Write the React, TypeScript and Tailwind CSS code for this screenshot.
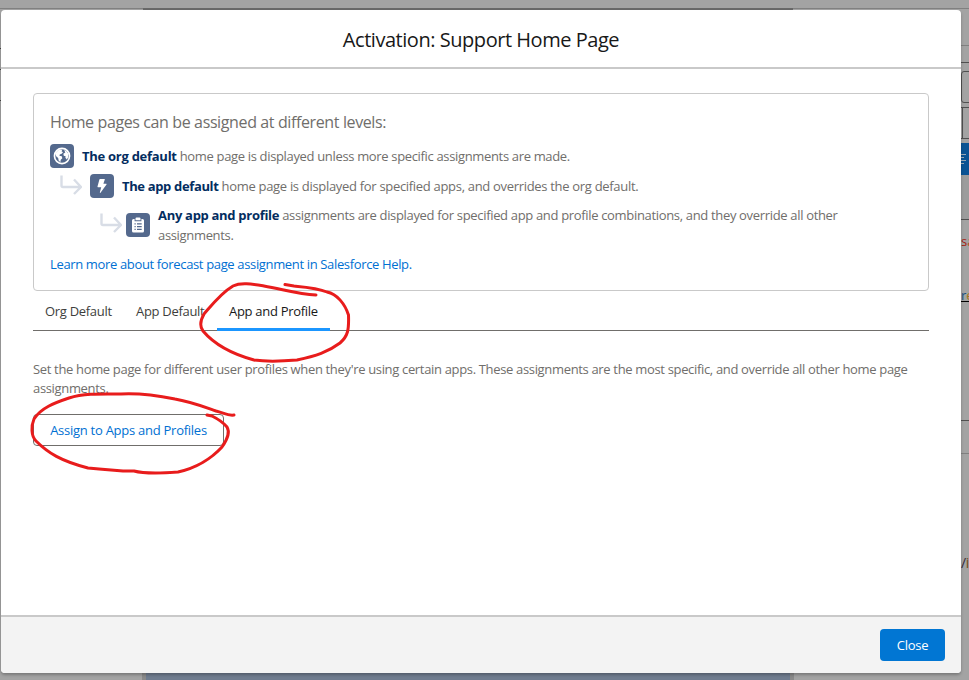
import React from 'react';

function HookArrow({ className }: { className: string }) {
  return (
    <svg className={className} viewBox="0 0 22 20" fill="none" stroke="#d8dde6" strokeWidth="2.4">
      <path d="M1.5 .5V10.5Q1.5 12 3 12H20M14 4.5L21 12L14 19" strokeLinejoin="round" />
    </svg>
  );
}

function Tile({ children }: { children: React.ReactNode }) {
  return (
    <span className="flex size-6 shrink-0 items-center justify-center rounded-[4px] bg-[#54698d]">{children}</span>
  );
}

function Backdrop() {
  return (
    <div className="flex h-full">
      <div className="flex grow flex-col">
        <div className="flex h-[10px] items-end">
          <div className="h-[2px] w-[143px] border-t border-[#808080] bg-[#a3a3a3]" />
          <div className="h-[2px] w-[650px] bg-[#686868]" />
          <div className="h-[2px] grow border-t border-[#808080]" />
        </div>
        <div className="mt-[38px] h-px w-px bg-[#444]" />
        <div className="mt-[20px] h-px w-px bg-[#444]" />
        <div className="mt-[30px] h-px w-px bg-[#444]" />
        <div className="grow" />
        <div className="ml-[142px] h-[12px] w-[652px] border-x-[4px] border-[#8a8a8a] bg-[#6f7c8f]" />
      </div>
      <div className="flex w-[8px] flex-col overflow-hidden">
        <div className="mt-[8px] h-[38px] border-y border-[#808080]" />
        <div className="mt-[16px] h-px shrink-0 bg-[#505050]" />
        <div className="mt-[8px] h-[32px] w-[12px] shrink-0 rounded-l-[3px] border border-[#505050]" />
        <div className="mt-[4px] h-[32px] shrink-0 border-y border-[#505050]">
          <div className="ml-px h-full w-px bg-[#505050]" />
        </div>
        <div className="mt-[4px] flex h-[32px] shrink-0 flex-col gap-[2px] bg-[#0b5394] pt-[11px]">
          <div className="h-[1px] w-[5px] bg-[#9aa9b8]" />
          <div className="h-[1px] w-[3px] bg-[#9aa9b8]" />
          <div className="h-[1px] w-[5px] bg-[#9aa9b8]" />
          <div className="h-[1px] w-[3px] bg-[#9aa9b8]" />
        </div>
        <div className="h-[45px] shrink-0 border-b border-[#505050] bg-[#9c9c9c]" />
        <div className="mt-[12px] h-[18px] shrink-0 text-[13px] leading-[18px] text-[#a51c12]">s<span className="text-[#b0541a]">a</span></div>
        <div className="mt-[38px] h-[14px] shrink-0 border-b border-black text-[13px] leading-[15px] text-[#164f80]">r<span className="text-[#a8781c]">e</span></div>
        <div className="h-[119px] shrink-0 border-b border-[#505050]" />
        <div className="h-[33px] shrink-0 border-b border-[#808080]" />
        <div className="mt-[99px] h-[20px] shrink-0 text-[14px] leading-[20px] tracking-[-0.4px] text-[#332a3a]">/<span className="text-[#7a4a10]">i</span></div>
      </div>
    </div>
  );
}

function Markup() {
  return (
    <svg className="absolute left-[-0.5px] top-0 h-[500px] w-[400px]" viewBox="0 0 400 500" fill="none" stroke="#e81c1c" strokeWidth="3" strokeLinecap="round" strokeLinejoin="round">
      <path d="M316 295C298 294 282 289 264 286C252 284 241 282 233 286C221 293 211 306 204 314C200 321 200 327 203 331C214 344 232 354 254 360C268 362 285 361 297 360C316 356 328 352 340 343C348 336 349 330 348.500 315C345 304 337 294 327 292C318 288 305 287 294 286L285 284.500" />
      <path d="M234 415C228 416 224 413 216 411C202 406 192 402 175 399C155 395 140 393 121 394C104 394 85 393 69 398C54 403 41 408 34 419C31 426 31 436 36 441C48 453 61 461 88 468L99 469L123 471H134C145 474 165 473 178 472C196 468 212 458 222 447C227 440 230 432 227 427C222 421 216 418 212 416L207 415" />
    </svg>
  );
}

export default function App() {
  return (
    <div className="relative h-[680px] w-[969px] overflow-hidden bg-[#a3a3a3] font-['Open_Sans',sans-serif] text-[13px] text-[#706e6b]">
      <Backdrop />
      <main className="absolute left-px top-[10px] flex h-[663px] w-[960px] flex-col overflow-hidden rounded-[4px] bg-white shadow-[0_2px_3px_rgba(0,0,0,0.25)]">
        <header className="flex h-[59px] shrink-0 items-center justify-center border-b-2 border-[#c9c9c9] pt-[3px]">
          <h1 className="text-[20px] leading-[26px] tracking-[-0.46px] text-[#181818]">Activation: Support Home Page</h1>
        </header>
        <div className="flex grow flex-col px-8 pt-[24px]">
          <section className="h-[198px] w-[896px] rounded-[4px] border border-[#c9c9c9] px-4 pt-[17px]">
            <h2 className="text-[16px] leading-[22px] tracking-[-0.38px]">Home pages can be assigned at different levels:</h2>
            <div className="mt-[11px] flex h-6 items-center gap-2">
              <Tile>
                <svg className="size-[18px]" viewBox="0 0 16 16">
                  <circle cx="8" cy="8" r="6.700" fill="none" stroke="white" strokeWidth="1.500" />
                  <path fill="white" d="M3 4.500L5.500 2.200L8.300 2.400L7.600 3.800L8.900 4.600L7.700 5.900L6 6.600L5.700 7.700L7.800 8.300L8.300 9.900L6.900 11.300L6.500 13.500L5 12L4.600 9.700L2.800 8.200L2.300 6ZM9.900 2.700L11.800 3.600L13.600 6L13.500 9L12.300 11.200L11 9.600L11.200 8.300L9.600 7.700L9.200 6L10.900 4.900Z" />
                </svg>
              </Tile>
              <p className="whitespace-nowrap pt-[2px] tracking-[-0.34px]"><b className="font-bold tracking-[-0.27px] text-[#032d60]">The org default</b> home page is displayed unless more specific assignments are made.</p>
            </div>
            <div className="ml-[10px] mt-[6px] flex h-6 items-center">
              <HookArrow className="mr-2 mt-[-3px] h-[20px] w-[22px]" />
              <Tile>
                <svg className="size-4" viewBox="0 0 16 16"><path fill="white" d="M6 1H10.500Q11 1 10.800 1.600L9.400 5.700H12.200Q13 5.800 12.500 6.500L6.500 14.800Q5.700 15.300 5.900 14.300L7.200 9.200H4Q3.300 9.200 3.500 8.500L5.400 1.500Q5.500 1 6 1Z" /></svg>
              </Tile>
              <p className="ml-2 whitespace-nowrap pt-[2px] tracking-[-0.31px]"><b className="font-bold tracking-[-0.35px] text-[#032d60]">The app default</b> home page is displayed for specified apps, and overrides the org default.</p>
            </div>
            <div className="ml-[50px] mt-[7px] flex h-10 items-center">
              <HookArrow className="mr-[4px] mt-[-5px] h-[20px] w-[22px]" />
              <Tile>
                <svg className="size-4" viewBox="0 0 16 16">
                  <path fill="white" d="M5.500 1.500Q5.600 .5 6.500 .5H9.500Q10.400 .5 10.500 1.500V3.300H5.500ZM3.500 2H4.600V4.200H11.400V2H12.500Q14 2 14 3.500V14Q14 15.500 12.500 15.500H3.500Q2 15.500 2 14V3.500Q2 2 3.500 2Z" />
                  <path stroke="#54698d" strokeWidth="1.200" d="M4.500 6.800H5.700M7 6.800H11.700M4.500 9.600H5.700M7 9.600H11.700M4.500 12.400H5.700M7 12.400H11.700" />
                </svg>
              </Tile>
              <p className="ml-2 whitespace-nowrap leading-[20px] tracking-[-0.33px]"><b className="font-bold tracking-[-0.3px] text-[#032d60]">Any app and profile</b> assignments are displayed for specified app and profile combinations, and they override all other<br />assignments.</p>
            </div>
            <a className="mt-[9px] block leading-5 tracking-[-0.35px] text-[#0070d2]">Learn more about forecast page assignment in Salesforce Help.</a>
          </section>
          <nav className="flex h-[40px] w-[896px] border-b border-[#706e6b] leading-[40px] tracking-[-0.3px] text-[#3e3e3c]">
            <span className="w-[91px] pl-3">Org Default</span>
            <span className="w-[93px] pl-3">App Default</span>
            <span className="h-[40px] w-[113px] border-b-[3px] border-[#1b96ff] pl-3 text-[#181818]">App and Profile</span>
          </nav>
          <p className="mt-[29px] whitespace-nowrap leading-[19px] tracking-[-0.335px]">Set the home page for different user profiles when they're using certain apps. These assignments are the most specific, and override all other home page<br />assignments.</p>
          <button className="mt-[16px] h-8 w-[191px] rounded-[4px] border border-[#706e6b] bg-white pt-[2px] tracking-[-0.26px] text-[#0070d2]">Assign to Apps and Profiles</button>
        </div>
        <footer className="flex h-[58px] shrink-0 items-center justify-end border-t-2 border-[#c9c9c9] bg-[#f3f3f3] pr-4">
          <button className="h-8 w-[65px] rounded-[4px] bg-[#0176d3] pt-[2px] tracking-[-0.3px] text-white">Close</button>
        </footer>
      </main>
      <Markup />
    </div>
  );
}
